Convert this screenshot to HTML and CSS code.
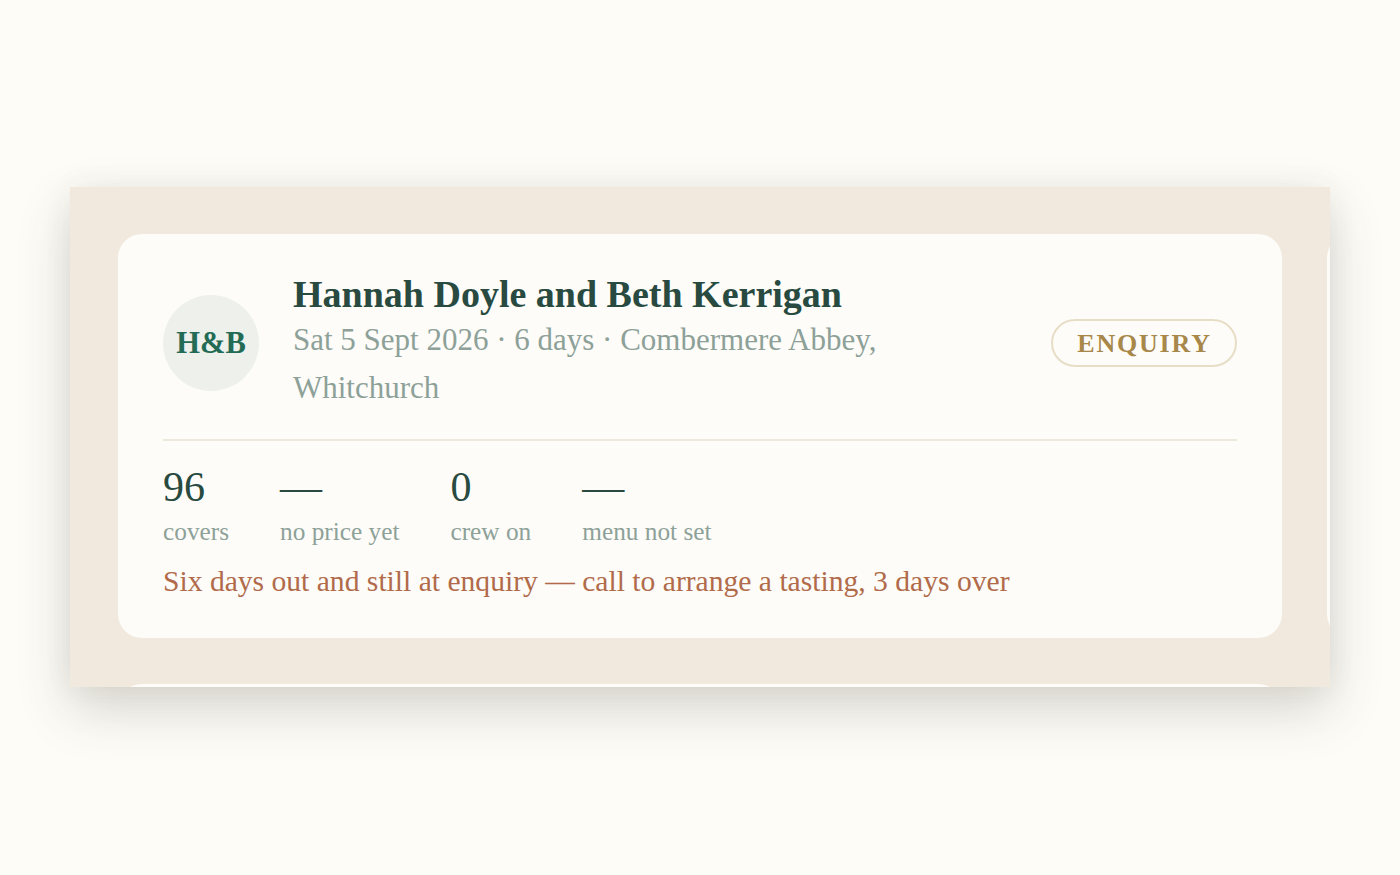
FILE: index.html
```html
<!DOCTYPE html>
<html lang="en">
<head>
<meta charset="utf-8">
<title>Upcoming events</title>
<link rel="stylesheet" href="styles.css">
</head>
<body>
  <main class="board">
    <div class="board-grid">
      <article class="event-card">
        <header class="event-head">
          <div class="monogram">H&amp;B</div>
          <div class="event-info">
            <h2 class="event-title">Hannah Doyle and Beth Kerrigan</h2>
            <p class="event-meta">Sat 5 Sept 2026 · 6 days · Combermere Abbey, Whitchurch</p>
          </div>
          <span class="status-pill">ENQUIRY</span>
        </header>
        <hr class="rule">
        <dl class="stats">
          <div class="stat">
            <dt class="stat-value">96</dt>
            <dd class="stat-label">covers</dd>
          </div>
          <div class="stat">
            <dt class="stat-value">—</dt>
            <dd class="stat-label">no price yet</dd>
          </div>
          <div class="stat">
            <dt class="stat-value">0</dt>
            <dd class="stat-label">crew on</dd>
          </div>
          <div class="stat">
            <dt class="stat-value">—</dt>
            <dd class="stat-label">menu not set</dd>
          </div>
        </dl>
        <p class="event-alert">Six days out and still at enquiry — call to arrange a tasting, 3 days over</p>
      </article>
      <article class="event-card" aria-hidden="true"></article>
      <article class="event-card" aria-hidden="true"></article>
      <article class="event-card" aria-hidden="true"></article>
    </div>
  </main>
</body>
</html>
```

FILE: styles.css
```css
* {
  box-sizing: border-box;
}

html,
body {
  margin: 0;
  padding: 0;
}

body {
  min-height: 100vh;
  background: #fdfcf7;
  font-family: "Liberation Serif", "Times New Roman", serif;
  display: flex;
  align-items: center;
  justify-content: center;
  padding: 0 70px 1px;
}

.board {
  width: 100%;
  height: 500px;
  background: #f1e9dd;
  padding: 47px 48px 0;
  overflow: hidden;
  box-shadow: 0 22px 50px rgba(70, 62, 45, 0.2), 0 0 28px rgba(70, 62, 45, 0.06);
}

/* cards tile in both directions; the board clips the neighbours */
.board-grid {
  display: grid;
  grid-template-columns: repeat(2, 1164px);
  grid-auto-rows: 404px;
  column-gap: 45px;
  row-gap: 46px;
}

.event-card {
  background: #fdfcf8;
  border-radius: 24px;
  padding: 39px 45px 35px;
}

.event-head {
  display: flex;
  align-items: center;
}

.monogram {
  flex: 0 0 96px;
  height: 96px;
  border-radius: 50%;
  background: #edf0eb;
  color: #246b56;
  font-weight: 700;
  font-size: 30.5px;
  display: flex;
  align-items: center;
  justify-content: center;
  margin-right: 34px;
  padding-top: 1px;
}

.event-info {
  flex: 1;
  max-width: 620px;
}

.event-title {
  margin: 0;
  font-size: 38px;
  line-height: 43px;
  font-weight: 700;
  color: #284a40;
}

.event-meta {
  margin: 0;
  font-size: 31px;
  line-height: 48px;
  color: #8da199;
}

.status-pill {
  margin-left: auto;
  border: 2px solid #e8dec7;
  border-radius: 999px;
  height: 48px;
  width: 186px;
  display: flex;
  align-items: center;
  justify-content: center;
  padding: 2px 0 0 1px;
  color: #a8884a;
  font-weight: 700;
  font-size: 26px;
  letter-spacing: 1.8px;
}

.rule {
  border: 0;
  height: 2px;
  background: #efe8dc;
  margin: 27px 0 21px;
}

.stats {
  display: flex;
  gap: 51px;
  margin: 0;
}

.stat {
  display: flex;
  flex-direction: column;
}

.stat-value {
  font-size: 42px;
  line-height: 50px;
  color: #284a40;
}

.stat-label {
  margin: 0;
  font-size: 25.3px;
  line-height: 38px;
  color: #8da199;
}

.event-alert {
  margin: 9px 0 0;
  font-size: 29.6px;
  line-height: 44px;
  color: #b16b4b;
}
```
